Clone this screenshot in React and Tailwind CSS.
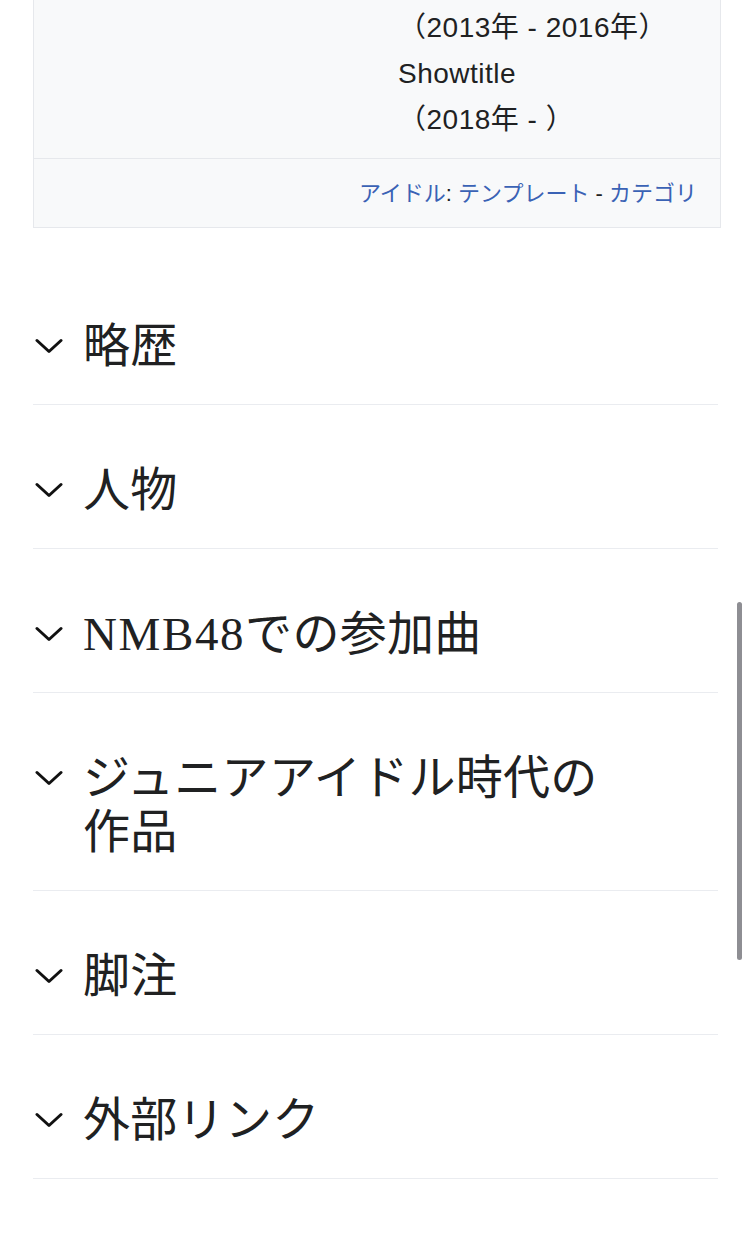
import React from 'react';

const sections = ['略歴', '人物', 'NMB48での参加曲', 'ジュニアアイドル時代の作品', '脚注', '外部リンク'];

// 折りたたみ見出しの矢印
const Chevron = () => (
  <svg width="28" height="16" viewBox="0 0 28 16" fill="none">
    <path d="M2 2.5 L14 13.5 L26 2.5" stroke="#111" strokeWidth="3" strokeLinecap="round" strokeLinejoin="round" />
  </svg>
);

// 英数字部分だけ字間を少し広げる
const HeadingText = ({ text }) =>
  text.split(/([A-Za-z0-9]+)/).map((part, i) =>
    /^[A-Za-z0-9]+$/.test(part) ? (
      <span key={i} className="tracking-[1.6px]">{part}</span>
    ) : (
      <React.Fragment key={i}>{part}</React.Fragment>
    )
  );

const App = () => {
  return (
    <div className="relative min-h-[1249px] bg-white text-[#202122]">
      {/* インフォボックスの末尾 */}
      <div className="ml-[33px] w-[688px] border-x border-b border-[#e6e8ec] bg-[#f8f9fa]">
        <div className="grid grid-cols-[364px_1fr] pt-[5px] pb-[15px] font-['Liberation_Sans','Noto_Sans_CJK_JP',sans-serif] text-[28px] leading-[46px] tracking-[0.5px]">
          <div></div>
          <div>
            <div>（2013年 - 2016年）</div>
            <div>Showtitle</div>
            <div>（2018年 - ）</div>
          </div>
        </div>
        <div className="flex h-[69px] items-center justify-end border-t border-[#e6e8ec] pr-[23px] font-['Liberation_Sans','Noto_Sans_CJK_JP',sans-serif] text-[22px]">
          <span className="text-[#3a62b5]">アイドル</span>
          <span>:&nbsp;</span>
          <span className="text-[#3a62b5]">テンプレート</span>
          <span>&nbsp;-&nbsp;</span>
          <span className="text-[#3a62b5]">カテゴリ</span>
        </div>
      </div>

      {/* 節の見出し */}
      <div className="ml-[33px] mt-[33px] w-[685px]">
        {sections.map((title) => (
          <div key={title} className="flex items-start border-b border-[#eaecf0] pt-[58px] pb-[31px]">
            <div className="flex h-[54px] w-[50px] shrink-0 items-center pl-[2px]">
              <Chevron />
            </div>
            <h2 className="max-w-[545px] font-['Liberation_Serif','Noto_Sans_CJK_JP',serif] text-[47px] font-normal leading-[54px] tracking-[0.3px] text-[#202122]">
              <HeadingText text={title} />
            </h2>
          </div>
        ))}
      </div>

      {/* スクロールバー */}
      <div className="absolute left-[737px] top-[602px] h-[358px] w-[5px] rounded-full bg-[#8e8e93]"></div>
    </div>
  );
};

export default App;
